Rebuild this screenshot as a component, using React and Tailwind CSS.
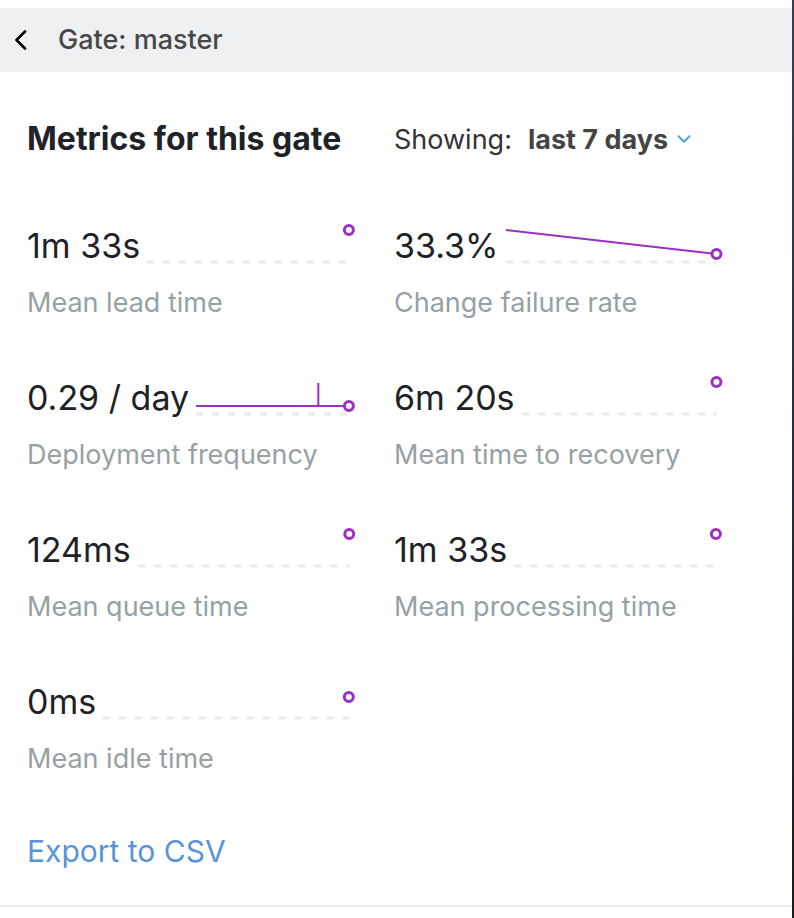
import { ChevronDown } from "lucide-react";

const PURPLE = "#9b2fc6";

const dotY = { flat: 7, zero: 18, slope: 31, step: 31 };

function Chart({ kind }) {
  return (
    <svg className="w-0 min-w-0 flex-1 h-[40px] ml-[7px] mr-[5px] overflow-visible" aria-hidden="true">
      <line x1="0" y1="39" x2="100%" y2="39" stroke="#e9e9e9" strokeWidth="3" strokeDasharray="7 9" />
      {kind === "slope" && <line x1="0" y1="7" x2="100%" y2="31" stroke={PURPLE} strokeWidth="2" />}
      {kind === "step" && (
        <>
          <line x1="0" y1="31" x2="100%" y2="31" stroke={PURPLE} strokeWidth="2" />
          <line x1="80%" y1="8" x2="80%" y2="31" stroke={PURPLE} strokeWidth="2" />
        </>
      )}
      <circle cx="100%" cy={dotY[kind]} r="4.5" fill="white" stroke={PURPLE} strokeWidth="3" />
    </svg>
  );
}

function Metric({ value, label, kind = "flat" }) {
  return (
    <div className="flex flex-col">
      <div className="flex items-end">
        <span className="shrink-0 whitespace-nowrap text-[34px] leading-none text-[#1e2226]">{value}</span>
        <Chart kind={kind} />
      </div>
      <div className="mt-[26px] text-[27px] leading-none whitespace-nowrap text-[#97a1a4]">{label}</div>
    </div>
  );
}

const metrics = [
  { value: "1m 33s", label: "Mean lead time" },
  { value: "33.3%", label: "Change failure rate", kind: "slope" },
  { value: "0.29 / day", label: "Deployment frequency", kind: "step" },
  { value: "6m 20s", label: "Mean time to recovery" },
  { value: "124ms", label: "Mean queue time" },
  { value: "1m 33s", label: "Mean processing time" },
  { value: "0ms", label: "Mean idle time", kind: "zero" },
];

export default function App() {
  return (
    <div className="w-[794px] h-[918px] flex bg-white font-['Inter',sans-serif]">
      <div className="flex-1 flex flex-col pt-[8px]">
        <header className="shrink-0 h-[64px] bg-[#eff0f2] flex items-center pl-[14px]">
          <svg width="14" height="20" viewBox="0 0 14 20" fill="none" aria-hidden="true">
            <polyline points="11,1.5 2.5,10 11,18.5" stroke="black" strokeWidth="2.6" strokeLinecap="round" strokeLinejoin="round" />
          </svg>
          <span className="ml-[30px] text-[27px] font-medium text-[#484848]">Gate: master</span>
        </header>

        <main className="flex-1 px-[27px] pt-[51px] border-b-2 border-[#ececec]">
          <div className="grid grid-cols-[327px_327px] gap-x-[40px]">
            <h1 className="text-[32px] leading-none font-bold text-[#1f2328]">Metrics for this gate</h1>
            <div className="flex items-center text-[27px] leading-none text-[#333]">
              <span>Showing:</span>
              <span className="ml-[16px] font-bold text-[#444]">last 7 days</span>
              <ChevronDown size={22} strokeWidth={2.2} className="ml-[5px] text-[#4da8da]" />
            </div>
          </div>

          <div className="mt-[68px] grid grid-cols-[327px_327px] gap-x-[40px] gap-y-[59px]">
            {metrics.map((m, i) => (
              <Metric key={i} {...m} />
            ))}
          </div>

          <a href="#" className="block mt-[64px] text-[30px] leading-none text-[#5a93dc]">
            Export to CSV
          </a>
        </main>
        <div className="shrink-0 h-[11px]" />
      </div>
      <div className="w-[2px] bg-gradient-to-b from-[#34405a] to-[#1b1b22]" />
    </div>
  );
}
